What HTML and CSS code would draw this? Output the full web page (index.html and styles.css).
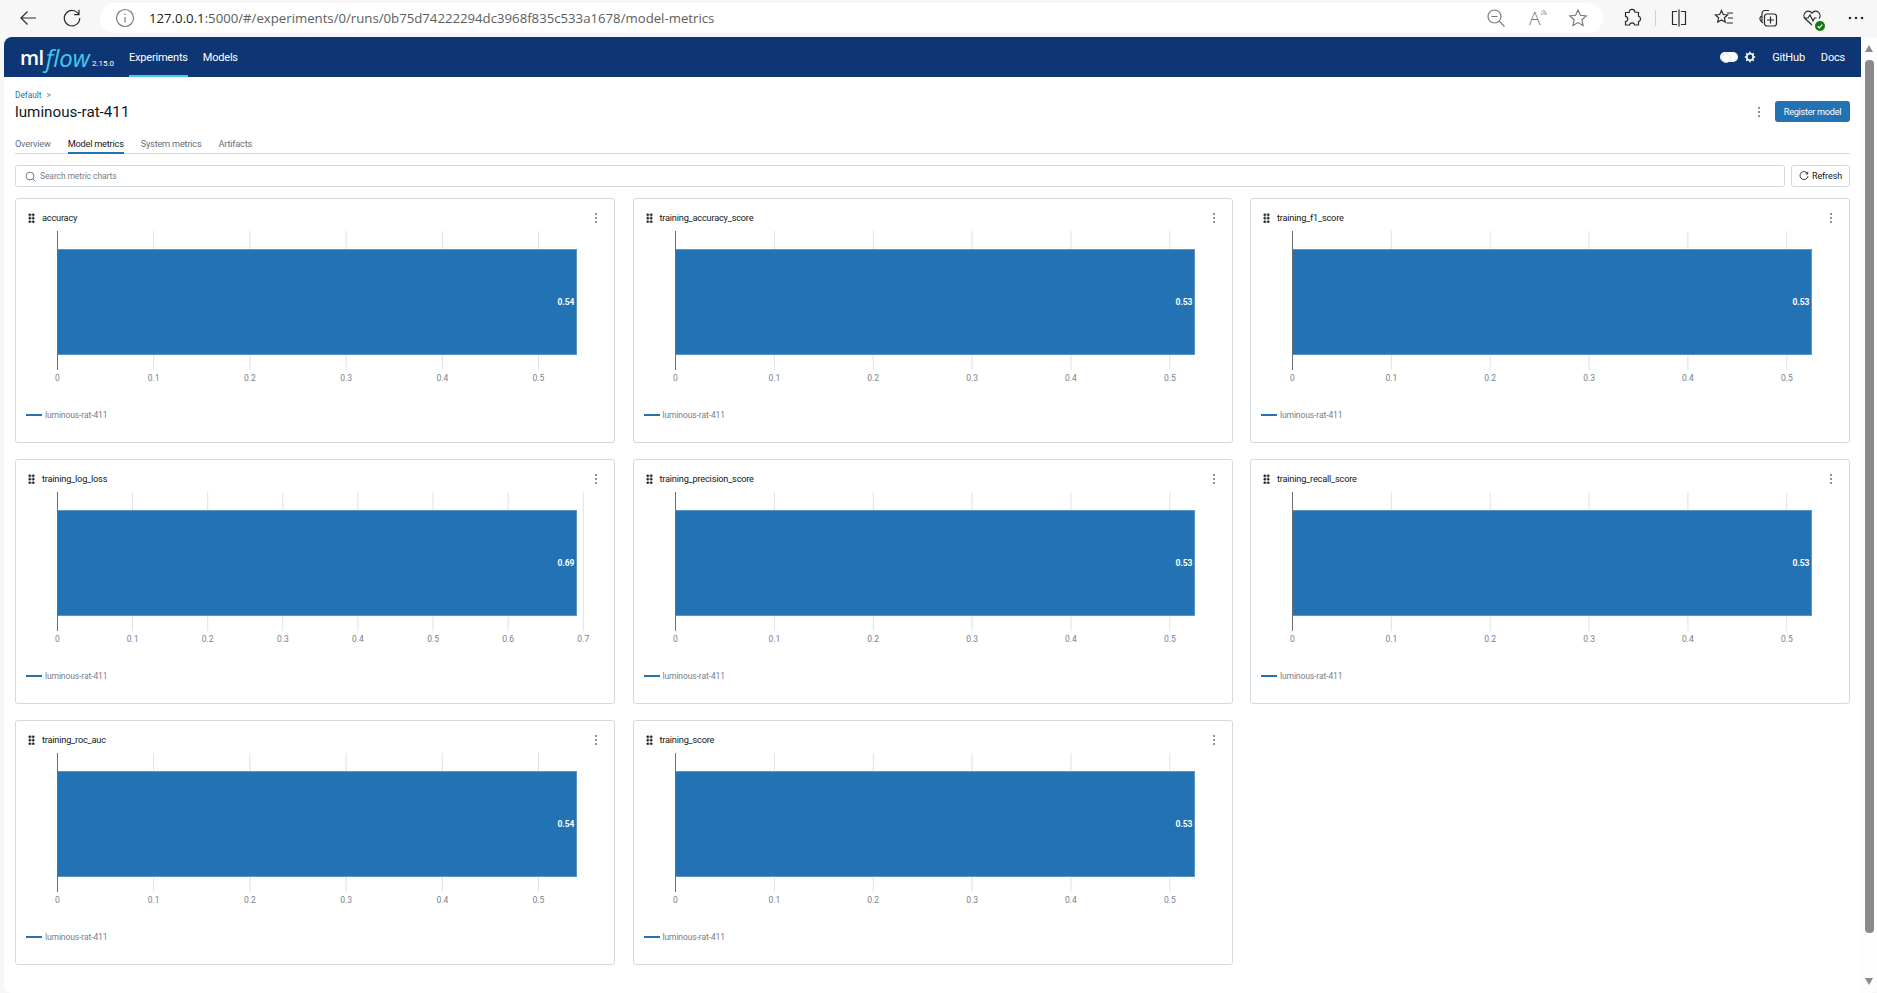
FILE: index.html
```html
<!DOCTYPE html>
<html lang="en">
<head>
    <meta charset="UTF-8">
    <meta name="viewport" content="width=device-width, initial-scale=1.0">
    <title>luminous-rat-411 - MLflow Run</title>
    <link rel="stylesheet" href="styles.css">
</head>
<body>
    <!-- browser toolbar -->
    <div class="toolbar">
        <svg class="tool-icon back-icon" viewBox="0 0 20 20"><path d="M18 10H3M9.5 3.5 3 10l6.5 6.5"/></svg>
        <svg class="tool-icon reload-icon" viewBox="0 0 20 20"><path d="M16.6 6.2A7.7 7.7 0 1 0 17.7 10M17 1.8v4.8h-4.8"/></svg>
        <div class="address-bar">
            <svg class="tool-icon grey" viewBox="0 0 20 20"><circle cx="10" cy="10" r="8.5"/><path d="M10 9v5.5M10 5.5v1.6"/></svg>
            <div class="url"><span class="url-host">127.0.0.1</span>:5000/#/experiments/0/runs/0b75d74222294dc3968f835c533a1678/model-metrics</div>
            <div class="address-actions">
                <svg class="tool-icon grey" viewBox="0 0 20 20"><circle cx="8.5" cy="8.5" r="6.5"/><path d="M5.5 8.5h6M13.2 13.2l5.3 5.3"/></svg>
                <div class="read-aloud"><span>A</span><svg viewBox="0 0 8 10"><path d="M1 3.500c1.200.6 1.800 1.500 1.800 2.800M2 1c2.200 1 3.200 2.700 3.200 5M4 .2c2.300 1.300 3.500 3.300 3.500 5.800"/></svg></div>
                <svg class="tool-icon grey" viewBox="0 0 20 20"><path d="m10 2 2.400 5.300 5.800.6-4.300 3.900 1.200 5.700L10 14.600 4.900 17.500l1.200-5.700L1.800 7.900l5.800-.6z"/></svg>
            </div>
        </div>
        <div class="browser-tools">
            <svg class="tool-icon" viewBox="0 0 20 20"><path d="M7.200 4.500a2.800 2.800 0 0 1 5.600-.5l3.700.5v3.700a2.800 2.800 0 0 1 0 5.400v3.400h-3.700a2.700 2.700 0 0 0-5.300 0H3.500v-3.400a2.700 2.700 0 0 0 0-5.300V4.500z"/></svg>
            <div class="tool-divider"></div>
            <svg class="tool-icon" viewBox="0 0 20 20"><path d="M8 3.500H3.500v13H8M12 3.500h4.500v13H12M10 1.500v17"/></svg>
            <svg class="tool-icon fav-icon" viewBox="0 0 20 20"><path d="m7.500 2.500 1.800 4 4.300.4-3.200 2.900.9 4.300-3.800-2.200-3.800 2.200.9-4.300L1.400 6.900l4.300-.4zM13 5h6M14 10h5M12.500 15H19"/></svg>
            <svg class="tool-icon wide-gap" viewBox="0 0 20 20"><path d="M4 13V5.500a3 3 0 0 1 3-3h4M3 8l-1 2a3 3 0 0 0 1 3l2 2"/><rect x="6.500" y="6" width="12" height="12" rx="2.500"/><path d="M12.500 8.500v7M9 12h7"/></svg>
            <div class="health-icon wide-gap">
                <svg class="tool-icon" viewBox="0 0 20 20"><path d="M10 17 3 10.500C-.5 6.500 5.500 0 10 5c4.500-5 10.500 1.500 7 5.500M2 10h4l2-3 3 6 1.500-3h2"/></svg>
                <svg class="health-badge" viewBox="0 0 10 10"><circle cx="5" cy="5" r="5"/><path d="m2.700 5.200 1.600 1.600 3-3.200"/></svg>
            </div>
            <svg class="tool-icon wide-gap dots-icon" viewBox="0 0 20 20"><circle cx="4" cy="10" r="1.300"/><circle cx="10" cy="10" r="1.300"/><circle cx="16" cy="10" r="1.300"/></svg>
        </div>
    </div>

    <div class="window">
        <div class="page">
            <nav class="navbar">
                <a class="logo"><span class="logo-ml">ml</span><span class="logo-flow">flow</span><span class="logo-version">2.15.0</span></a>
                <a class="nav-link active">Experiments</a>
                <a class="nav-link">Models</a>
                <div class="nav-right">
                    <span class="theme-toggle"></span>
                    <svg class="gear" viewBox="0 0 12 12"><circle cx="6" cy="6" r="3.200"/><path d="M6 .8v2M6 9.200v2M.8 6h2M9.200 6h2M2.300 2.300l1.400 1.400M8.300 8.300l1.400 1.400M9.700 2.300 8.300 3.700M3.700 8.300 2.300 9.700"/></svg>
                    <a class="nav-link plain">GitHub</a>
                    <a class="nav-link plain">Docs</a>
                </div>
            </nav>

            <main class="content">
                <div class="breadcrumb"><a>Default</a><span>&gt;</span></div>
                <div class="title-row">
                    <h1>luminous-rat-411</h1>
                    <span class="kebab"></span>
                    <button class="primary-btn">Register model</button>
                </div>

                <div class="tabs">
                    <a class="tab">Overview</a>
                    <a class="tab active">Model metrics</a>
                    <a class="tab">System metrics</a>
                    <a class="tab">Artifacts</a>
                </div>

                <div class="search-row">
                    <div class="search-box">
                        <svg viewBox="0 0 12 12"><circle cx="5.500" cy="5.500" r="4.300"/><path d="m8.700 8.700 2.600 2.600"/></svg>
                        <span>Search metric charts</span>
                    </div>
                    <button class="refresh-btn">
                        <svg viewBox="0 0 12 12"><path d="M10.300 3.300A4.800 4.800 0 1 0 10.800 6M10.500 1v2.600H7.900"/></svg>
                        Refresh
                    </button>
                </div>

                <div class="chart-grid" id="chart-grid"></div>
            </main>
        </div>

        <div class="scrollbar">
            <span class="arrow-up"></span>
            <span class="thumb"></span>
            <span class="arrow-down"></span>
        </div>
    </div>

    <script src="script.js"></script>
</body>
</html>
```

FILE: styles.css
```css
* {
    box-sizing: border-box;
}
html, body {
    height: 100%;
}
body {
    margin: 0;
    display: flex;
    flex-direction: column;
    overflow: hidden;
    background: #f7f7f7;
    font-family: Roboto, "Open Sans", sans-serif;
    color: #11171c;
}
button {
    font-family: inherit;
}

/* browser toolbar */
.toolbar {
    height: 37px;
    flex: none;
    display: flex;
    align-items: center;
    padding: 0 11px 1px 18px;
}
.tool-icon {
    width: 20px;
    height: 20px;
    flex: none;
    fill: none;
    stroke: #2b2b2b;
    stroke-width: 1.200;
}
.tool-icon.grey {
    stroke: #77797b;
}
.back-icon {
    margin-right: 24px;
}
.address-bar {
    width: 1503px;
    height: 30px;
    margin-left: 18px;
    padding: 0 15px;
    display: flex;
    align-items: center;
    background: white;
    border-radius: 15px;
}
.url {
    margin-left: 14px;
    font-family: "Open Sans", sans-serif;
    font-size: 13.200px;
    color: #5c5e60;
}
.url-host {
    color: #1b1b1b;
}
.address-actions {
    margin-left: auto;
    display: flex;
    gap: 21px;
}
.read-aloud {
    width: 20px;
    height: 20px;
    padding-left: 2px;
    display: flex;
    font-family: "Open Sans", sans-serif;
    color: #77797b;
    font-size: 19px;
    font-weight: 300;
    line-height: 20px;
}
.read-aloud svg {
    width: 8px;
    height: 10px;
    margin-top: 1px;
    fill: none;
    stroke: #77797b;
}
.browser-tools {
    margin-left: 19px;
    display: flex;
    align-items: center;
    gap: 13px;
}
.tool-divider {
    width: 1px;
    height: 16px;
    background: #d0d0d0;
}
.fav-icon {
    margin-left: 12px;
}
.wide-gap {
    margin-left: 11px;
}
.health-icon {
    position: relative;
    width: 20px;
    height: 20px;
}
.health-badge {
    position: absolute;
    right: -3px;
    bottom: -3px;
    width: 10px;
    height: 10px;
    fill: #107c10;
    stroke: white;
    stroke-width: 1.200;
}
.health-badge circle {
    stroke: none;
}
.health-badge path {
    fill: none;
}
.dots-icon {
    fill: #2b2b2b;
    stroke: none;
}

/* app window */
.window {
    flex: 1;
    min-height: 0;
    margin-left: 4px;
    display: flex;
    background: white;
    border-radius: 8px 0 8px 8px;
    overflow: hidden;
}
.page {
    flex: 1;
    min-width: 0;
}
.scrollbar {
    width: 16px;
    flex: none;
    display: flex;
    flex-direction: column;
    align-items: center;
    padding: 8px 0;
    background: #fdfdfd;
}
.arrow-up, .arrow-down {
    width: 0;
    height: 0;
    border-left: 4.500px solid transparent;
    border-right: 4.500px solid transparent;
}
.arrow-up {
    border-bottom: 7px solid #8a8a8a;
}
.arrow-down {
    margin-top: auto;
    border-top: 7px solid #8a8a8a;
}
.thumb {
    width: 9px;
    height: 873px;
    margin-top: 8px;
    border-radius: 4px;
    background: #8a8a8a;
}

.navbar {
    height: 40px;
    display: flex;
    align-items: stretch;
    padding: 0 16px;
    background: #0e3675;
    color: white;
    font-size: 11px;
    letter-spacing: -0.2px;
}
.logo {
    width: 109px;
    display: flex;
    align-items: center;
    white-space: nowrap;
    letter-spacing: 0;
}
.logo-ml {
    font-family: "Open Sans", sans-serif;
    font-size: 20px;
    font-weight: 600;
    letter-spacing: -0.5px;
    padding-right: 2px;
}
.logo-flow {
    font-family: "Open Sans", sans-serif;
    font-size: 24px;
    font-style: italic;
    font-weight: 400;
    color: #43c9ed;
}
.logo-version {
    font-size: 8px;
    align-self: flex-end;
    margin: 0 0 9px 2px;
}
.nav-link {
    display: flex;
    align-items: center;
    margin-right: 15px;
    padding-top: 2px;
    border-bottom: 2px solid transparent;
}
.nav-link.active {
    border-bottom-color: #43c9ed;
}
.nav-link.plain {
    margin: 0 0 0 16px;
}
.nav-right {
    margin-left: auto;
    display: flex;
    align-items: center;
}
.theme-toggle {
    position: relative;
    width: 18px;
    height: 10px;
    border-radius: 5px;
    background: white;
}
.theme-toggle::after {
    content: "";
    position: absolute;
    left: 1px;
    top: 1px;
    width: 8px;
    height: 8px;
    border-radius: 50%;
    border: 1px solid #e0e4e8;
}
.gear {
    width: 12px;
    height: 12px;
    margin-left: 6px;
    fill: none;
    stroke: white;
    stroke-width: 1.600;
}

.content {
    padding: 11px 11px 0;
}
.breadcrumb {
    height: 12px;
    padding-top: 2px;
    display: flex;
    align-items: center;
    gap: 5px;
    font-size: 8.300px;
    color: #77808a;
}
.breadcrumb a {
    color: #2272b4;
}
.title-row {
    height: 23px;
    display: flex;
    align-items: center;
}
h1 {
    margin: 0;
    font-size: 15.200px;
    font-weight: 400;
}
.kebab {
    position: relative;
    width: 2px;
    height: 2px;
    margin-left: auto;
    margin-right: 15px;
    border-radius: 50%;
    background: #5f7281;
    box-shadow: 0 -4px 0 #5f7281, 0 4px 0 #5f7281;
}
.primary-btn {
    width: 75px;
    height: 21px;
    padding: 0;
    border: none;
    border-radius: 3px;
    background: #2272b4;
    color: white;
    font-size: 9.200px;
    letter-spacing: -0.3px;
}

.tabs {
    height: 18px;
    margin-top: 13px;
    display: flex;
    gap: 17px;
    border-bottom: 1px solid #d1d9e1;
    font-size: 9.200px;
    letter-spacing: -0.2px;
    color: #5f7281;
}
.tab {
    height: 18px;
    line-height: 16px;
}
.tab.active {
    color: #11171c;
    border-bottom: 2px solid #2272b4;
}

.search-row {
    height: 22px;
    margin-top: 11px;
    display: flex;
    gap: 6px;
}
.search-box {
    flex: 1;
    display: flex;
    align-items: center;
    gap: 4px;
    padding-left: 9px;
    border: 1px solid #d1d9e1;
    border-radius: 3px;
    font-size: 8.500px;
    letter-spacing: -0.1px;
    color: #77808a;
}
.search-box svg {
    width: 11px;
    height: 11px;
    fill: none;
    stroke: #5f7281;
}
.refresh-btn {
    width: 59px;
    padding: 0;
    display: flex;
    align-items: center;
    justify-content: center;
    gap: 3px;
    background: white;
    border: 1px solid #d1d9e1;
    border-radius: 3px;
    font-size: 9px;
    letter-spacing: -0.1px;
    color: #11171c;
}
.refresh-btn svg {
    width: 10px;
    height: 10px;
    fill: none;
    stroke: #11171c;
}

/* metric charts */
.chart-grid {
    margin-top: 11px;
    display: grid;
    grid-template-columns: repeat(3, 1fr);
    gap: 16.500px 17.500px;
}
.chart-card {
    height: 244.500px;
    border: 1px solid #d1d9e1;
    border-radius: 3px;
}
.card-header {
    height: 32px;
    padding: 5px 17px 0 12px;
    display: flex;
    align-items: center;
    font-size: 9.200px;
    letter-spacing: -0.2px;
}
.drag-handle {
    width: 7px;
    height: 10px;
    margin-right: 7px;
    background-image: radial-gradient(circle, #11171c 1.200px, transparent 1.500px);
    background-size: 3.500px 3.500px;
}
.card-header .kebab {
    margin-right: 0;
}
.chart-svg {
    display: block;
    width: 100%;
    height: 163px;
}
.grid-line {
    stroke: #dbe2e8;
}
.axis-line {
    stroke: #6e6e6e;
}
.bar {
    fill: #2272b4;
    stroke: #5b96c8;
}
.tick-label {
    font-size: 8.500px;
    fill: #77808a;
    text-anchor: middle;
    dominant-baseline: middle;
}
.bar-value {
    font-size: 8.500px;
    font-weight: 700;
    fill: white;
    text-anchor: end;
    dominant-baseline: middle;
}
.legend {
    height: 42px;
    padding-left: 10px;
    display: flex;
    align-items: center;
    gap: 3px;
    font-size: 8.500px;
    letter-spacing: -0.1px;
    color: #77808a;
}
.legend-line {
    width: 16px;
    height: 2px;
    background: #2272b4;
}
```

FILE: script.js
```js
const RUN_NAME = "luminous-rat-411";
const metrics = [
    { name: "accuracy", value: 0.5395, lastTick: 5 },
    { name: "training_accuracy_score", value: 0.525, lastTick: 5 },
    { name: "training_f1_score", value: 0.525, lastTick: 5 },
    { name: "training_log_loss", value: 0.691, lastTick: 7 },
    { name: "training_precision_score", value: 0.525, lastTick: 5 },
    { name: "training_recall_score", value: 0.525, lastTick: 5 },
    { name: "training_roc_auc", value: 0.5395, lastTick: 5 },
    { name: "training_score", value: 0.525, lastTick: 5 }
];

const AXIS_X = 41.5;
const BAR_WIDTH = 519;

function buildChart(metric) {
    const scale = BAR_WIDTH / metric.value;
    let ticks = "";
    for (let i = 0; i <= metric.lastTick; i++) {
        const x = AXIS_X + (i / 10) * scale;
        if (i > 0) {
            ticks += `<line class="grid-line" x1="${x}" x2="${x}" y1="0" y2="139"/>`;
        }
        ticks += `<text class="tick-label" x="${x}" y="148">${i === 0 ? "0" : (i / 10).toFixed(1)}</text>`;
    }
    return `<svg class="chart-svg">
        ${ticks}
        <rect class="bar" x="${AXIS_X}" y="18.500" width="${BAR_WIDTH}" height="105"/>
        <line class="axis-line" x1="${AXIS_X}" x2="${AXIS_X}" y1="0" y2="139"/>
        <text class="bar-value" x="${AXIS_X + BAR_WIDTH - 2}" y="72">${metric.value.toFixed(2)}</text>
    </svg>`;
}

const grid = document.getElementById("chart-grid");
metrics.forEach(metric => {
    const card = document.createElement("div");
    card.className = "chart-card";
    card.innerHTML = `
        <div class="card-header">
            <span class="drag-handle"></span>
            <span>${metric.name}</span>
            <span class="kebab"></span>
        </div>
        ${buildChart(metric)}
        <div class="legend"><span class="legend-line"></span><span>${RUN_NAME}</span></div>`;
    grid.appendChild(card);
});
```
